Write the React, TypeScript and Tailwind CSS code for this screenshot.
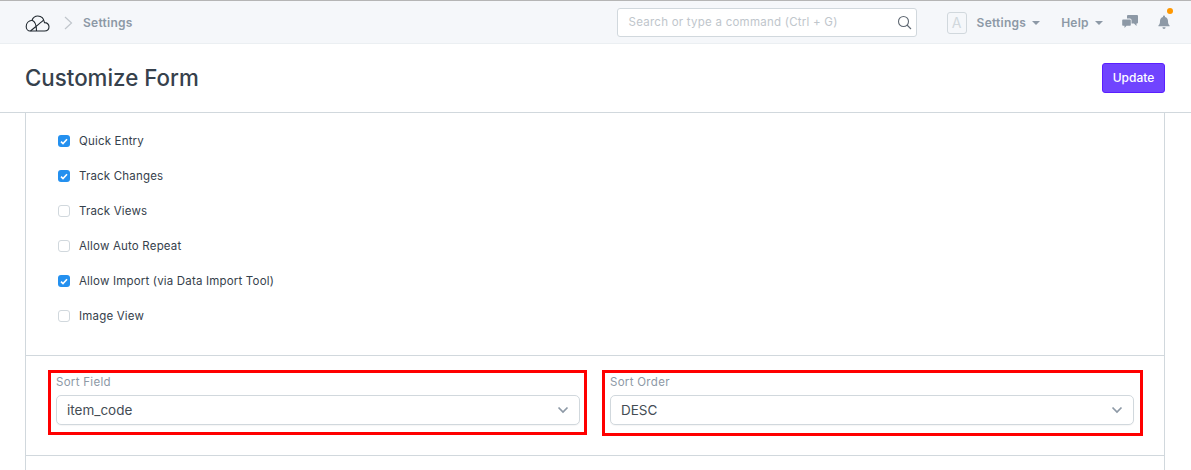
import React from "react";

const font = { fontFamily: "Inter, 'Liberation Sans', sans-serif" };

function Caret() {
  return <span className="ml-[6px] mt-[1px] h-0 w-0 border-x-[4px] border-t-[4px] border-x-transparent border-t-[#8d99a6]" />;
}

function Check({ checked, label }: { checked: boolean; label: string }) {
  return (
    <div className="flex h-[35px] items-center">
      <span className={checked ? "mt-[-1px] flex h-[12px] w-[12px] items-center justify-center rounded-[3px] bg-[#2490ef]" : "mt-[-1px] h-[12px] w-[12px] rounded-[3px] border border-[#d1d8dd] bg-white"}>
        {checked && (
          <svg width="8" height="7" viewBox="0 0 8 7" fill="none">
            <path d="M1 3.6 3 5.5 7 1.2" stroke="#fff" strokeWidth="1.6" />
          </svg>
        )}
      </span>
      <span className="ml-[9px] text-[11.5px] tracking-[0.18px] text-[#36414c]">{label}</span>
    </div>
  );
}

function SelectField({ label, value, className, inset }: { label: string; value: string; className: string; inset: string }) {
  return (
    <div className={`border-[3px] border-[#ff0000] ${className}`}>
      <div className={`ml-[5px] mt-[1px] ${inset}`}>
        <div className="h-[16px] text-[11.5px] leading-[16px] tracking-[0.3px] text-[#8d99a6]">{label}</div>
        <div className="mt-[5px] flex h-[30px] items-center justify-between rounded-[5px] border border-[#d1d8dd] bg-white pl-[10px] pr-[10px] shadow-[0_1px_1px_rgba(0,0,0,0.04)]">
          <span className="text-[13.5px] text-[#444c54]">{value}</span>
          <svg width="12" height="8" viewBox="0 0 12 8" fill="none">
            <path d="M1.5 1.5 6 6l4.5-4.5" stroke="#8d99a6" strokeWidth="1.7" />
          </svg>
        </div>
      </div>
    </div>
  );
}

export default function App() {
  return (
    <div className="h-[470px] w-[1191px] overflow-hidden bg-white" style={font}>
      <header className="flex h-[44px] items-center border-t border-b border-t-[#b5b5b5] border-b-[#ebeff2] bg-[#f5f7fa] pt-[1px]">
        <svg className="ml-[25px]" width="25" height="18" viewBox="0 0 25 18" fill="none" stroke="#1f272e" strokeWidth="1.1">
          <path d="M5 17H19.500C22.500 17 24 15 24 12.800C24 10.300 22 8.500 19.500 8.600C18.800 4.500 16 2 12.800 2C10 2 8 3.500 7 6.200C3.500 6.700 1.200 9.500 1.200 12.500C1.200 15 3 17 5 17Z" />
          <path d="M5.500 17C9 14 14 10 18.800 5.800M7 6.200C9.500 7 11.500 10.500 11.500 17" />
        </svg>
        <svg className="ml-[14px]" width="9" height="14" viewBox="0 0 9 14" fill="none">
          <path d="M1 1l6.500 6L1 13" stroke="#c0c6cc" strokeWidth="1.2" />
        </svg>
        <span className="ml-[10px] text-[12px] font-semibold tracking-[0.25px] text-[#8d99a6]">Settings</span>
        <div className="ml-[484px] flex h-[29px] w-[300px] items-center justify-between rounded-[3px] border border-[#d1d8dd] bg-white pl-[11px] pr-[4px]">
          <span className="mt-[1px] text-[11.5px] tracking-[0.24px] text-[#c0c6cc]">Search or type a command (Ctrl + G)</span>
          <svg width="15" height="15" viewBox="0 0 15 15" fill="none" stroke="#5f6872" strokeWidth="1.1">
            <circle cx="6.500" cy="6.500" r="5" />
            <path d="M10 10l4 4" />
          </svg>
        </div>
        <span className="ml-[30px] flex h-[22px] w-[20px] items-center justify-center rounded-[3px] border border-[#d1d8dd] text-[14px] text-[#d1d8dd]">A</span>
        <span className="ml-[10px] text-[12px] font-semibold tracking-[0.25px] text-[#8d99a6]">Settings</span>
        <Caret />
        <span className="ml-[21px] text-[12px] font-semibold tracking-[0.25px] text-[#8d99a6]">Help</span>
        <Caret />
        <svg className="ml-[19px] mt-[-2px]" width="16" height="14" viewBox="0 0 16 14" fill="#8d99a6">
          <path d="M6 0h9a1 1 0 0 1 1 1v6.500a1 1 0 0 1-1 1h-.500V11L12 8.500H9.500V5A1.500 1.500 0 0 0 8 3.500H5V1a1 1 0 0 1 1-1z" />
          <path d="M1 4.500h7a.8.8 0 0 1 .8.8V10a.8.8 0 0 1-.8.8H4.500L2.500 13v-2.200H1a.8.8 0 0 1-.8-.8V5.300a.8.8 0 0 1 .8-.8z" />
        </svg>
        <div className="relative ml-[20px] mt-[-2px] h-[14px] w-[12px]">
          <svg width="12" height="14" viewBox="0 0 12 14" fill="#8d99a6">
            <path d="M6 .5c.6 0 1 .4 1 1v.4c1.900.5 3 2.100 3 4 0 2.500.5 3.600 1.600 4.600v.8H.4v-.8C1.500 9.500 2 8.400 2 5.900c0-1.900 1.100-3.500 3-4v-.4c0-.6.400-1 1-1z" />
            <path d="M4.400 12.300h3.200a1.600 1.600 0 0 1-3.200 0z" />
          </svg>
          <span className="absolute right-[-3px] top-[-7px] h-[6px] w-[6px] rounded-full bg-[#ff9800]" />
        </div>
      </header>

      <div className="flex h-[69px] items-center justify-between border-b border-[#d1d8dd] pl-[25px] pr-[26px]">
        <h1 className="text-[22.3px] font-medium text-[#36414c]">Customize Form</h1>
        <button className="flex h-[30px] w-[63px] items-center justify-center rounded-[3px] border border-[#5a1fff] bg-[#7044ff] text-[12px] font-medium text-white">Update</button>
      </div>

      <main className="mx-[25px] h-[357px] w-[1140px] border-x border-[#d1d8dd]">
        <div className="h-[242px] pl-[32px] pt-[11px]">
          <Check checked label="Quick Entry" />
          <Check checked label="Track Changes" />
          <Check checked={false} label="Track Views" />
          <Check checked={false} label="Allow Auto Repeat" />
          <Check checked label="Allow Import (via Data Import Tool)" />
          <Check checked={false} label="Image View" />
        </div>
        <div className="flex h-[101px] items-start gap-[15px] border-y border-[#d1d8dd] pl-[22px] pt-[14px]">
          <SelectField label="Sort Field" value="item_code" className="h-[65px] w-[539px]" inset="mr-[4px]" />
          <SelectField label="Sort Order" value="DESC" className="h-[66px] w-[541px]" inset="mr-[6px]" />
        </div>
      </main>
    </div>
  );
}
